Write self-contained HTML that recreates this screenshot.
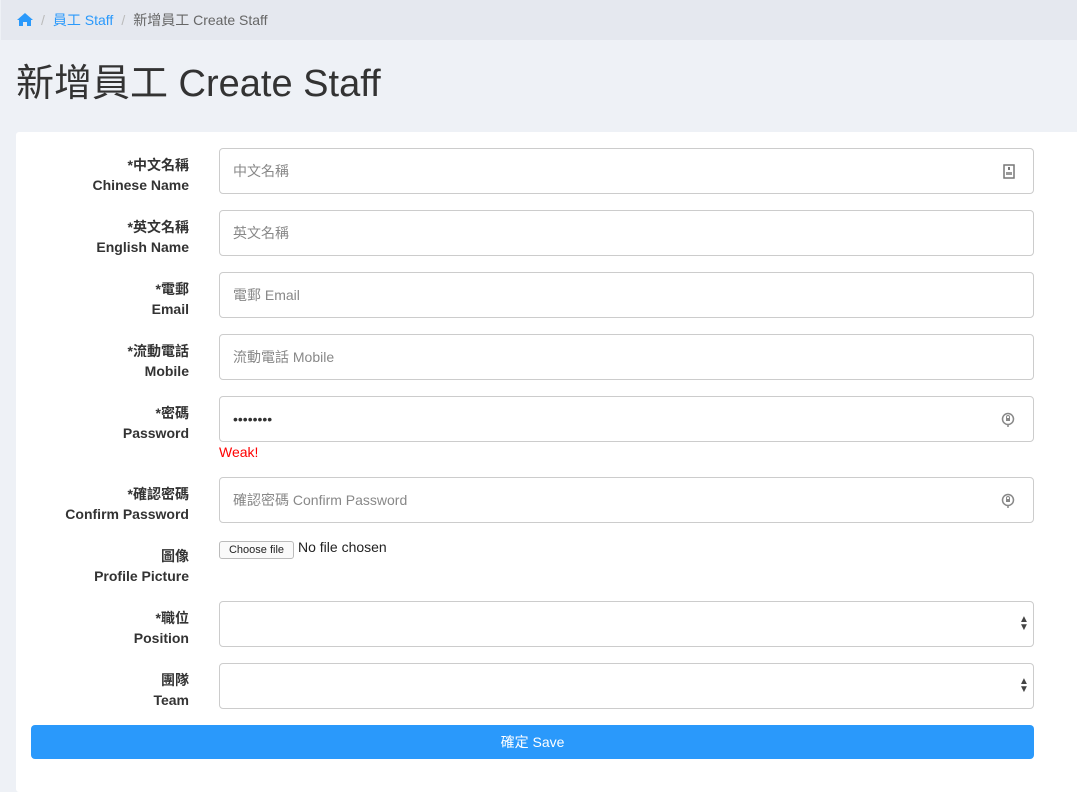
<!DOCTYPE html>
<html><head><meta charset="utf-8"><style>
*{box-sizing:border-box;margin:0;padding:0}
body{width:1077px;height:776px;overflow:hidden;background:#eef1f6;font-family:"Liberation Sans","Noto Sans CJK TC",sans-serif;position:relative;color:#333}
.bc{position:absolute;left:1px;top:0;width:1076px;height:40px;background:#e5e8ef;font-size:14px;line-height:40px;padding-left:16px;color:#666}
.bc a{color:#2a99fb;text-decoration:none}
.bc .s{color:#bbb;margin:0 8px}
h1{position:absolute;left:16px;top:52px;font-size:38px;font-weight:normal;color:#333;letter-spacing:0}
.card{position:absolute;left:16px;top:132px;width:1080px;height:660px;background:#fff;border-radius:3px}
.lab{position:absolute;right:888px;width:180px;text-align:right;font-weight:bold;font-size:14px;line-height:20px;color:#333}
.inp{position:absolute;left:219px;width:815px;height:46px;border:1px solid #ccc;border-radius:4px;background:#fff;font-size:14px;color:#888;line-height:44px;padding-left:13px}
.ic{position:absolute;right:18px;top:15px}
.btn{position:absolute;left:31px;top:725px;width:1003px;height:34px;background:#2a99fb;border-radius:4px;color:#fff;font-size:14px;text-align:center;line-height:34px}
.arr{position:absolute;right:4px;top:14px;width:10px;font-size:10px;line-height:8px;color:#444}
</style></head><body>
<div class="bc"><svg width="16" height="13" viewBox="0 0 16 13" style="vertical-align:-1px"><path d="M8 0L0 7h2v6h4V9h4v4h4V7h2z" fill="#2a99fb"/></svg><span class="s">/</span><a>員工 Staff</a><span class="s">/</span>新增員工 Create Staff</div>
<h1>新增員工 Create Staff</h1>
<div class="card"></div>

<div class="lab" style="top:155px">*中文名稱<br>Chinese Name</div>
<div class="inp" style="top:148px">中文名稱<svg class="ic" width="12" height="15" viewBox="0 0 12 15"><rect x="1" y="1" width="10" height="13" fill="none" stroke="#777" stroke-width="1.5"/><rect x="5" y="3" width="2" height="3" fill="#777"/><rect x="3" y="8" width="6" height="3" fill="#999"/></svg></div>

<div class="lab" style="top:217px">*英文名稱<br>English Name</div>
<div class="inp" style="top:210px">英文名稱</div>

<div class="lab" style="top:279px">*電郵<br>Email</div>
<div class="inp" style="top:272px">電郵 Email</div>

<div class="lab" style="top:341px">*流動電話<br>Mobile</div>
<div class="inp" style="top:334px">流動電話 Mobile</div>

<div class="lab" style="top:403px">*密碼<br>Password</div>
<div class="inp" style="top:396px;color:#333;font-size:14px">••••••••<svg class="ic" width="14" height="16" viewBox="0 0 14 16"><circle cx="7" cy="7" r="5.5" fill="none" stroke="#888" stroke-width="1.5"/><rect x="5" y="6" width="4" height="3" fill="#888"/><path d="M5.5 6V5a1.5 1.5 0 0 1 3 0v1" fill="none" stroke="#888"/><path d="M7 12v3" stroke="#888" stroke-width="1.5"/></svg></div>
<div style="position:absolute;left:219px;top:444px;color:#f00;font-size:14px">Weak!</div>

<div class="lab" style="top:484px">*確認密碼<br>Confirm Password</div>
<div class="inp" style="top:477px">確認密碼 Confirm Password<svg class="ic" width="14" height="16" viewBox="0 0 14 16"><circle cx="7" cy="7" r="5.5" fill="none" stroke="#888" stroke-width="1.5"/><rect x="5" y="6" width="4" height="3" fill="#888"/><path d="M5.5 6V5a1.5 1.5 0 0 1 3 0v1" fill="none" stroke="#888"/><path d="M7 12v3" stroke="#888" stroke-width="1.5"/></svg></div>

<div class="lab" style="top:546px">圖像<br>Profile Picture</div>
<div style="position:absolute;left:219px;top:541px;height:18px;width:75px;border:1px solid #bbb;border-radius:3px;font-size:11px;line-height:16px;text-align:center;color:#222;background:#fafafa">Choose file</div>
<div style="position:absolute;left:298px;top:539px;font-size:14px;color:#222">No file chosen</div>

<div class="lab" style="top:608px">*職位<br>Position</div>
<div class="inp" style="top:601px"><div class="arr">▲<br>▼</div></div>

<div class="lab" style="top:670px">團隊<br>Team</div>
<div class="inp" style="top:663px"><div class="arr">▲<br>▼</div></div>

<div class="btn">確定 Save</div>
</body></html>
